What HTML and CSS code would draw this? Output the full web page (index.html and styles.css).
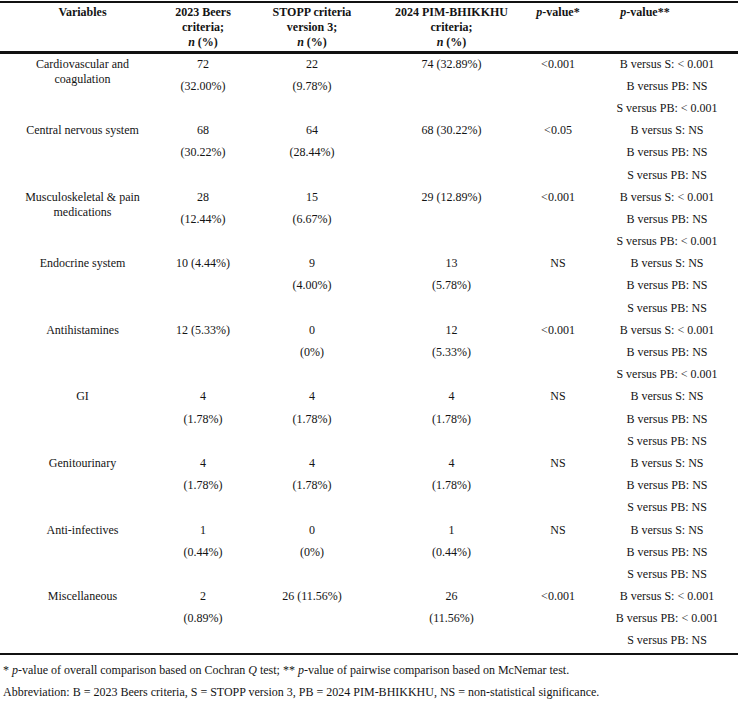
FILE: index.html
```html
<!DOCTYPE html>
<html>
<head>
<meta charset="utf-8">
<link rel="stylesheet" href="styles.css">
</head>
<body>
<table class="tbl">
<colgroup>
<col class="c1"><col class="c2"><col class="c3"><col class="c4"><col class="c5"><col class="c6">
</colgroup>
<thead>
<tr>
<th>Variables</th>
<th>2023 Beers<br>criteria;<br><i>n</i> (%)</th>
<th>STOPP criteria<br>version 3;<br><i>n</i> (%)</th>
<th>2024 PIM-BHIKKHU<br>criteria;<br><i>n</i> (%)</th>
<th><i>p</i>-value*</th>
<th class="h6"><i>p</i>-value**</th>
</tr>
</thead>
<tbody>
<tr>
<td><p>Cardiovascular and<br>coagulation</p></td>
<td><p>72</p><p>(32.00%)</p></td>
<td><p>22</p><p>(9.78%)</p></td>
<td><p>74 (32.89%)</p></td>
<td><p>&lt;0.001</p></td>
<td><p>B versus S: &lt; 0.001</p><p>B versus PB: NS</p><p>S versus PB: &lt; 0.001</p></td>
</tr>
<tr>
<td><p>Central nervous system</p></td>
<td><p>68</p><p>(30.22%)</p></td>
<td><p>64</p><p>(28.44%)</p></td>
<td><p>68 (30.22%)</p></td>
<td><p>&lt;0.05</p></td>
<td><p>B versus S: NS</p><p>B versus PB: NS</p><p>S versus PB: NS</p></td>
</tr>
<tr>
<td><p>Musculoskeletal &amp; pain<br>medications</p></td>
<td><p>28</p><p>(12.44%)</p></td>
<td><p>15</p><p>(6.67%)</p></td>
<td><p>29 (12.89%)</p></td>
<td><p>&lt;0.001</p></td>
<td><p>B versus S: &lt; 0.001</p><p>B versus PB: NS</p><p>S versus PB: &lt; 0.001</p></td>
</tr>
<tr>
<td><p>Endocrine system</p></td>
<td><p>10 (4.44%)</p></td>
<td><p>9</p><p>(4.00%)</p></td>
<td><p>13</p><p>(5.78%)</p></td>
<td><p>NS</p></td>
<td><p>B versus S: NS</p><p>B versus PB: NS</p><p>S versus PB: NS</p></td>
</tr>
<tr>
<td><p>Antihistamines</p></td>
<td><p>12 (5.33%)</p></td>
<td><p>0</p><p>(0%)</p></td>
<td><p>12</p><p>(5.33%)</p></td>
<td><p>&lt;0.001</p></td>
<td><p>B versus S: &lt; 0.001</p><p>B versus PB: NS</p><p>S versus PB: &lt; 0.001</p></td>
</tr>
<tr>
<td><p>GI</p></td>
<td><p>4</p><p>(1.78%)</p></td>
<td><p>4</p><p>(1.78%)</p></td>
<td><p>4</p><p>(1.78%)</p></td>
<td><p>NS</p></td>
<td><p>B versus S: NS</p><p>B versus PB: NS</p><p>S versus PB: NS</p></td>
</tr>
<tr>
<td><p>Genitourinary</p></td>
<td><p>4</p><p>(1.78%)</p></td>
<td><p>4</p><p>(1.78%)</p></td>
<td><p>4</p><p>(1.78%)</p></td>
<td><p>NS</p></td>
<td><p>B versus S: NS</p><p>B versus PB: NS</p><p>S versus PB: NS</p></td>
</tr>
<tr>
<td><p>Anti-infectives</p></td>
<td><p>1</p><p>(0.44%)</p></td>
<td><p>0</p><p>(0%)</p></td>
<td><p>1</p><p>(0.44%)</p></td>
<td><p>NS</p></td>
<td><p>B versus S: NS</p><p>B versus PB: NS</p><p>S versus PB: NS</p></td>
</tr>
<tr class="last">
<td><p>Miscellaneous</p></td>
<td><p>2</p><p>(0.89%)</p></td>
<td><p>26 (11.56%)</p></td>
<td><p>26</p><p>(11.56%)</p></td>
<td><p>&lt;0.001</p></td>
<td><p>B versus S: &lt; 0.001</p><p>B versus PB: &lt; 0.001</p><p>S versus PB: NS</p></td>
</tr>
</tbody>
</table>
<div class="notes">
<p>* <i>p</i>-value of overall comparison based on Cochran <i>Q</i> test; ** <i>p</i>-value of pairwise comparison based on McNemar test.</p>
<p>Abbreviation: B = 2023 Beers criteria, S = STOPP version 3, PB = 2024 PIM-BHIKKHU, NS = non-statistical significance.</p>
</div>
</body>
</html>
```

FILE: styles.css
```css
html, body {
  margin: 0;
  padding: 0;
  background: #ffffff;
}
body {
  font-family: "Liberation Serif", "Times New Roman", serif;
  font-size: 12px;
  color: #141414;
}
.tbl {
  width: 738px;
  margin-top: 1px;
  border-collapse: collapse;
  table-layout: fixed;
}
.c1 { width: 165px; }
.c2 { width: 76px; }
.c3 { width: 142px; }
.c4 { width: 137px; }
.c5 { width: 76px; }
.c6 { width: 142px; }
.tbl thead tr {
  border-top: 2px solid #111;
  border-bottom: 3px solid #111;
}
.tbl th {
  font-weight: bold;
  line-height: 15px;
  padding: 1.5px 0 1.5px 0;
  vertical-align: top;
  text-align: center;
}
.tbl th.h6 {
  padding-right: 44px;
}
.tbl td {
  padding: 0;
  vertical-align: top;
  text-align: center;
}
.tbl td p {
  margin: 0;
  padding: 2.6px 0 4.6px 0;
  line-height: 15px;
}
.tbl tr.last {
  border-bottom: 2px solid #111;
}
.notes {
  padding: 5px 0 0 3px;
}
.notes p {
  margin: 0;
  padding: 2.6px 0 4.6px 0;
  line-height: 15px;
}
```
